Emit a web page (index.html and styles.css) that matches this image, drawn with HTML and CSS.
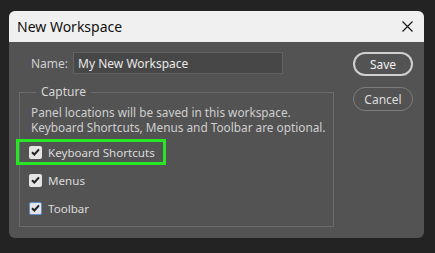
FILE: index.html
```html
<!DOCTYPE html>
<html lang="en">
<head>
    <meta charset="UTF-8">
    <title>New Workspace</title>
    <link rel="stylesheet" href="styles.css">
</head>
<body>
    <div class="dialog">
        <!-- Title bar -->
        <div class="titlebar">
            <span class="title">New Workspace</span>
            <svg class="close" width="11" height="11" viewBox="0 0 11 11">
                <path d="M0.5 0.5 L10.5 10.5 M10.5 0.5 L0.5 10.5" stroke="#1a1a1a" stroke-width="1.2" fill="none"/>
            </svg>
        </div>

        <div class="content">
            <!-- Left side -->
            <div class="main">
                <div class="name-row">
                    <label for="wsName">Name:</label>
                    <input type="text" id="wsName" value="My New Workspace">
                </div>

                <fieldset class="capture">
                    <legend>Capture</legend>
                    <p class="note">Panel locations will be saved in this workspace.</p>
                    <p class="note">Keyboard Shortcuts, Menus and Toolbar are optional.</p>

                    <div class="options">
                        <div class="option highlight">
                            <span class="check"><svg width="9" height="8" viewBox="0 0 9 8"><path d="M1 4.2 L3.4 6.5 L8 1.3" stroke="#222" stroke-width="2" fill="none"/></svg></span>
                            Keyboard Shortcuts
                        </div>
                        <div class="option">
                            <span class="check"><svg width="9" height="8" viewBox="0 0 9 8"><path d="M1 4.2 L3.4 6.5 L8 1.3" stroke="#222" stroke-width="2" fill="none"/></svg></span>
                            Menus
                        </div>
                        <div class="option">
                            <span class="check focused"><svg width="9" height="8" viewBox="0 0 9 8"><path d="M1 4.2 L3.4 6.5 L8 1.3" stroke="#222" stroke-width="2" fill="none"/></svg></span>
                            Toolbar
                        </div>
                    </div>
                </fieldset>
            </div>

            <!-- Right side -->
            <div class="buttons">
                <button class="btn primary">Save</button>
                <button class="btn">Cancel</button>
            </div>
        </div>
    </div>
</body>
</html>
```

FILE: styles.css
```css
body {
    margin: 0;
    padding: 11px 11px 0 9px;
    background: #232323;
    font-family: "Noto Sans", "Open Sans", sans-serif;
    font-size: 11.8px;
    color: #d6d6d6;
}

.dialog {
    width: 415px;
    height: 227px;
    background: #535353;
    border-radius: 6px;
    overflow: hidden;
    box-sizing: border-box;
}

.titlebar {
    height: 31px;
    background: #f0f0f0;
    display: flex;
    align-items: center;
    justify-content: space-between;
    padding: 0 11px 0 8px;
}

.title {
    font-size: 14px;
    color: #111;
}

.content {
    display: flex;
    padding: 10px 11px 0 10px;
}

.main {
    width: 315px;
}

.name-row {
    display: flex;
    align-items: center;
    padding-left: 12px;
    height: 22px;
}

.name-row label {
    font-size: 12px;
    color: #cfcfcf;
    margin-right: 5px;
}

#wsName {
    width: 210px;
    height: 22px;
    box-sizing: border-box;
    background: #474747;
    border: 1px solid #626262;
    color: #e8e8e8;
    font-family: inherit;
    font-size: 12px;
    padding: 0 4px;
    outline: none;
}

.capture {
    margin: 11px 0 0 0;
    padding: 6px 0 9px 0;
    border: 1px solid #6b6b6b;
    height: 142px;
    box-sizing: border-box;
}

.capture legend {
    margin-left: 16px;
    padding: 0 5px;
    font-size: 12px;
    line-height: 14px;
    color: #d6d6d6;
}

.note {
    margin: 0 0 0 11px;
    line-height: 15px;
    color: #cfcfcf;
}

.options {
    display: flex;
    flex-direction: column;
    gap: 10px;
    margin-top: 8px;
}

.option {
    display: flex;
    align-items: center;
    height: 18px;
    width: 142px;
    padding-left: 9px;
    box-sizing: border-box;
    font-size: 11.6px;
    color: #dadada;
}

.option.highlight {
    outline: 3px solid #26e626;
    outline-offset: 1px;
}

.check {
    width: 13px;
    height: 13px;
    box-sizing: border-box;
    background: #e4e4e4;
    border-radius: 2px;
    display: flex;
    align-items: center;
    justify-content: center;
    margin-right: 6px;
}

.check.focused {
    border: 1.5px solid #5a8fd8;
}

.buttons {
    display: flex;
    flex-direction: column;
    gap: 11px;
    margin-left: auto;
}

.btn {
    width: 60px;
    height: 24px;
    border-radius: 12px;
    background: transparent;
    border: 1px solid #7c7c7c;
    color: #dcdcdc;
    font-family: inherit;
    font-size: 12px;
    padding: 0;
}

.btn.primary {
    border: 2px solid #cfcfcf;
    color: #f0f0f0;
}
```
